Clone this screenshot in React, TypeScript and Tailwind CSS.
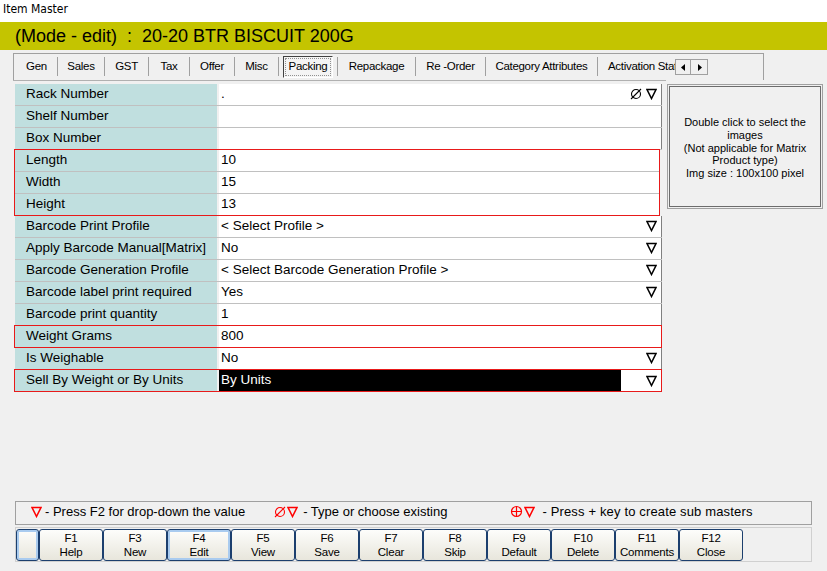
import React from "react";

type RowT = { label: string; value: string; kind?: "dd" | "combo" };

const rows: RowT[] = [
  { label: "Rack Number", value: ".", kind: "combo" },
  { label: "Shelf Number", value: "" },
  { label: "Box Number", value: "" },
  { label: "Length", value: "10" },
  { label: "Width", value: "15" },
  { label: "Height", value: "13" },
  { label: "Barcode Print Profile", value: "< Select Profile >", kind: "dd" },
  { label: "Apply Barcode Manual[Matrix]", value: "No", kind: "dd" },
  { label: "Barcode Generation Profile", value: "< Select Barcode Generation Profile >", kind: "dd" },
  { label: "Barcode label print required", value: "Yes", kind: "dd" },
  { label: "Barcode print quantity", value: "1" },
  { label: "Weight Grams", value: "800" },
  { label: "Is Weighable", value: "No", kind: "dd" },
];

const tabs = [
  { t: "Gen", w: 42 },
  { t: "Sales", w: 47 },
  { t: "GST", w: 44 },
  { t: "Tax", w: 41 },
  { t: "Offer", w: 45 },
  { t: "Misc", w: 44 },
  { t: "Packing", w: 59, sel: true },
  { t: "Repackage", w: 78 },
  { t: "Re -Order", w: 70 },
  { t: "Category Attributes", w: 112 },
];

const fkeys = [
  ["F1", "Help"],
  ["F3", "New"],
  ["F4", "Edit"],
  ["F5", "View"],
  ["F6", "Save"],
  ["F7", "Clear"],
  ["F8", "Skip"],
  ["F9", "Default"],
  ["F10", "Delete"],
  ["F11", "Comments"],
  ["F12", "Close"],
];

function Tri({ red }: { red?: boolean }) {
  return (
    <svg width="11" height="12" viewBox="0 0 11 12" className="shrink-0">
      <path d="M1 1.5 H10 L5.5 10.5 Z" fill="none" stroke={red ? "#ff0000" : "#000"} strokeWidth="1.5" />
    </svg>
  );
}

function Empty({ red }: { red?: boolean }) {
  return (
    <svg width="12" height="12" viewBox="0 0 12 12" className="shrink-0">
      <circle cx="6" cy="6" r="4.5" fill="none" stroke={red ? "#ff0000" : "#000"} strokeWidth="1.1" />
      <path d="M1 11 L11 1" stroke={red ? "#ff0000" : "#000"} strokeWidth="1.1" />
    </svg>
  );
}

function Plus() {
  return (
    <svg width="13" height="13" viewBox="0 0 13 13" className="shrink-0">
      <circle cx="6.5" cy="6.5" r="5" fill="none" stroke="#ff0000" strokeWidth="1.2" />
      <path d="M1.5 6.5 H11.5 M6.5 1.5 V11.5" stroke="#ff0000" strokeWidth="1.2" />
    </svg>
  );
}

function Row({ label, value, kind, last, boxed }: RowT & { last?: boolean; boxed?: boolean }) {
  return (
    <div className={last ? "flex h-[21px]" : "flex h-[22px] border-b border-[#c0c0c0]"}>
      <div className="w-[202px] bg-[#c0dfdf] pl-[11px] pb-[1px] flex items-center text-[13.5px] text-black">{label}</div>
      <div className="w-[2px] bg-[#f0f0f0]" />
      <div className={"flex-1 bg-white flex items-center pb-[1px] pl-[2px] pr-[4px] text-[13.5px] " + (boxed ? "" : "border-r border-[#808080]")}>
        <span className="flex-1">{value}</span>
        {kind === "dd" && <Tri />}
        {kind === "combo" && (
          <span className="flex items-center gap-[4px]">
            <Empty />
            <Tri />
          </span>
        )}
      </div>
    </div>
  );
}

export default function App() {
  const sans = { fontFamily: '"Liberation Sans", Arial, sans-serif' };
  return (
    <div className="w-[827px] h-[571px] bg-[#f0f0f0] overflow-hidden flex flex-col" style={sans}>
      {/* title */}
      <div className="h-[22px] bg-white flex items-center pl-[3px] pb-[5px] text-[12px] text-black" style={{ fontFamily: '"DejaVu Sans Condensed", "Liberation Sans", sans-serif' }}>
        Item Master
      </div>
      {/* yellow header */}
      <div className="h-[28px] bg-[#c4c400] flex items-center pl-[15px] text-[18px] text-black">
        (Mode - edit)&nbsp;&nbsp;:&nbsp;&nbsp;20-20 BTR BISCUIT 200G
      </div>
      {/* tabs */}
      <div className="mt-[3px] ml-[13px] w-[751px] h-[27px] border-t border-l border-r border-[#a0a0a0] flex items-center pb-[1px] pl-[2px] text-[11.5px] tracking-[-0.3px]">
        {tabs.map((tb) => (
          <div key={tb.t} className="flex items-center h-full shrink-0" style={{ width: tb.w }}>
            {tb.sel ? (
              <div className="flex-1 mx-[4px] h-[22px] mt-[1px] flex items-center justify-center border-t border-l border-[#404040] border-b border-r border-b-white border-r-white bg-[#f4f4f4] outline-1 outline-dotted outline-[#909090] outline-offset-[-3px]">
                {tb.t}
              </div>
            ) : (
              <div className="flex-1 text-center whitespace-nowrap overflow-hidden">{tb.t}</div>
            )}
            <div className="w-[1px] h-[19px] bg-[#a0a0a0]" />
          </div>
        ))}
        <div className="w-[77px] h-full flex items-center overflow-hidden whitespace-nowrap pl-[10px] shrink-0">Activation Status</div>
        <div className="flex shrink-0 mb-[-1px]">
          <div className="w-[16px] h-[16px] bg-[#f0f0f0] border border-[#a0a0a0] flex items-center justify-center">
            <svg width="5" height="7" viewBox="0 0 5 7"><path d="M4 0 L0 3.5 L4 7 Z" fill="#000" /></svg>
          </div>
          <div className="w-[17px] h-[16px] bg-[#f0f0f0] border border-l-0 border-[#a0a0a0] flex items-center justify-center">
            <svg width="5" height="7" viewBox="0 0 5 7"><path d="M1 0 L5 3.5 L1 7 Z" fill="#000" /></svg>
          </div>
        </div>
      </div>
      <div className="ml-[13px] w-[653px] h-[1px] bg-[#b0b0b0]" />

      {/* body */}
      <div className="flex mt-[3px]">
        <div className="ml-[15px] w-[647px] flex flex-col">
          {rows.slice(0, 3).map((r) => (
            <Row key={r.label} {...r} />
          ))}
          <div className="border border-[#e81a1a] -ml-[1px] -mt-[1px] w-[646px]">
            {rows.slice(3, 6).map((r, i) => (
              <Row key={r.label} {...r} boxed last={i === 2} />
            ))}
          </div>
          {rows.slice(6, 11).map((r) => (
            <Row key={r.label} {...r} />
          ))}
          <div className="border border-[#e81a1a] -ml-[1px] -mt-[1px] w-[648px]">
            <Row {...rows[11]} boxed last />
          </div>
          <Row {...rows[12]} />
          <div className="border border-[#e81a1a] -ml-[1px] -mt-[1px] w-[648px] h-[23px] flex">
            <div className="w-[202px] bg-[#c0dfdf] pl-[11px] pb-[1px] flex items-center text-[13.5px] text-black">Sell By Weight or By Units</div>
            <div className="w-[2px] bg-[#f0f0f0]" />
            <div className="w-[402px] bg-black text-white flex items-center pb-[1px] pl-[2px] text-[13.5px]">By Units</div>
            <div className="flex-1 bg-white flex items-center justify-end pr-[4px]">
              <Tri />
            </div>
          </div>
        </div>
        {/* image box */}
        <div className="ml-[5px] w-[156px] h-[125px] border border-[#a0a0a0] p-[1px]">
          <div className="w-full h-full border border-[#6c6c6c] flex items-center justify-center text-center text-[11px] leading-[12.7px] text-black">
            <div className="mt-[3px]">
              Double click to select the
              <br />
              images
              <br />
              (Not applicable for Matrix
              <br />
              Product type)
              <br />
              Img size : 100x100 pixel
            </div>
          </div>
        </div>
      </div>

      <div className="flex-1" />

      {/* legend */}
      <div className="ml-[15px] w-[797px] h-[24px] border border-[#a0a0a0] flex items-center pb-[3px] text-[13px] text-black">
        <span className="ml-[15px]"><Tri red /></span>
        <span className="ml-[3px]">- Press F2 for drop-down the value</span>
        <span className="ml-[29px] flex items-center gap-[1px]">
          <Empty red />
          <Tri red />
        </span>
        <span className="ml-[5px]">- Type or choose existing</span>
        <span className="ml-[63px] flex items-center gap-[1px]">
          <Plus />
          <Tri red />
        </span>
        <span className="ml-[7px] tracking-[0.15px]">- Press + key to create sub masters</span>
      </div>

      {/* function keys */}
      <div className="mt-[2px] mb-[9px] ml-[15px] w-[797px] h-[35px] border border-[#d0d0d0] flex items-start pt-[1px] text-[11.5px] tracking-[-0.2px]">
        <div className="w-[23px] h-[32px] rounded-[3px] border border-[#1c3f6e] bg-gradient-to-b from-[#fdfdfb] to-[#e8e6dc] shadow-[inset_0_0_0_2px_#a9cbef]" />
        {fkeys.map(([k, l]) => (
          <div
            key={k}
            className={
              "w-[64px] h-[32px] rounded-[3px] border border-[#1c3f6e] bg-gradient-to-b from-[#fdfdfb] to-[#e8e6dc] flex flex-col items-center justify-center leading-[14px] text-black " +
              (k === "F4" ? "shadow-[inset_0_0_0_2px_#a9cbef]" : "")
            }
          >
            <span>{k}</span>
            <span>{l}</span>
          </div>
        ))}
      </div>
    </div>
  );
}
